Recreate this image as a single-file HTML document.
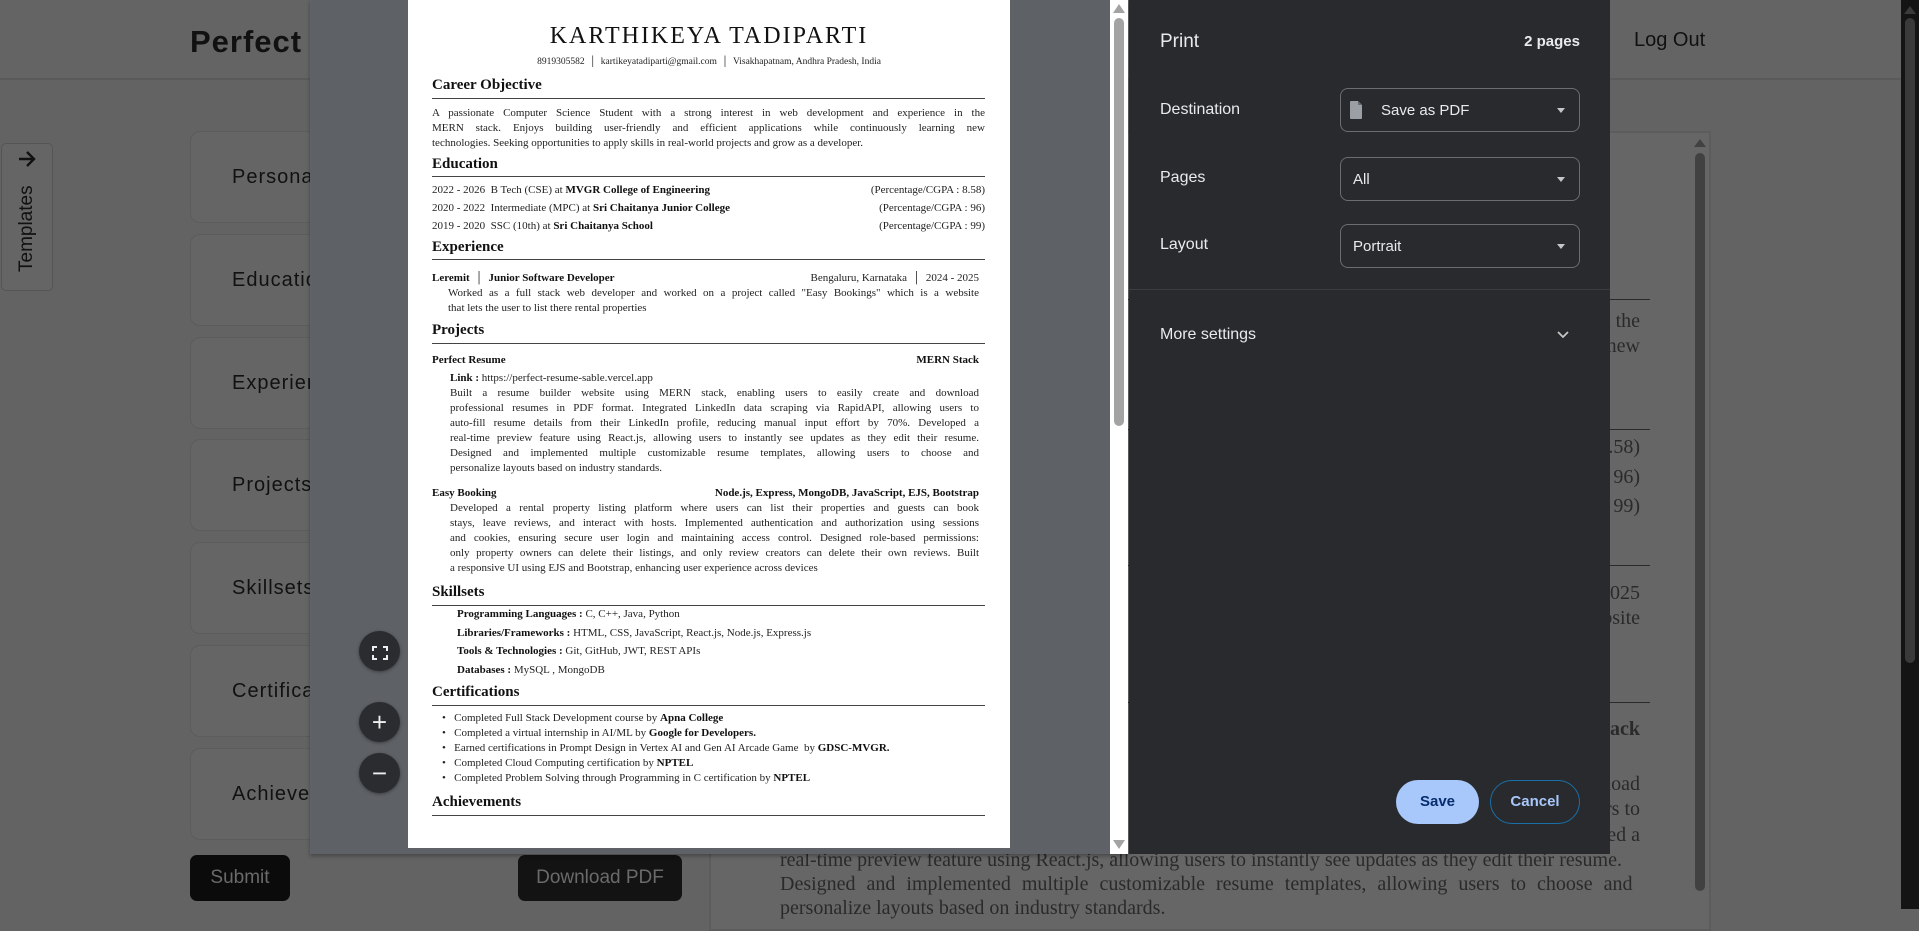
<!DOCTYPE html>
<html><head><meta charset="utf-8"><style>
*{margin:0;padding:0;box-sizing:border-box}
body{width:1919px;height:909px;overflow:hidden;background:#636363;font-family:"Liberation Sans",sans-serif;position:relative}
.a{position:absolute}
.hdr{left:0;top:0;width:1901px;height:80px;border-bottom:2px solid #5a5a5a;background:#646464}
.card{left:190px;width:520px;height:92px;border:1px solid #5c5c5c;border-radius:10px;background:#656565}
.card span{position:absolute;left:41px;top:34px;font-size:20px;letter-spacing:1px;color:#111}
.btn{background:#0b0b0b;color:#6a6a6a;border-radius:7px;font-size:19px;text-align:center;line-height:45px}
.rp{left:709px;top:131px;width:1002px;height:800px;border:2px solid #5c5c5c;background:#666}
.rt{font-family:"Liberation Serif",serif;font-size:20px;color:#2a2a2a;left:780px;width:860px;line-height:24px;white-space:nowrap}
.rule{height:1px;background:#2a2a2a}
.pv{left:310px;top:0;width:818px;height:854px;background:#5e6166;box-shadow:0 2px 4px rgba(0,0,0,.3)}
.page{left:408px;top:0;width:602px;height:848px;background:#fff}
.page div{position:absolute;font-family:"Liberation Serif",serif;font-size:11px;color:#222;line-height:14px;white-space:nowrap}
.page .h{font-size:15px;font-weight:bold;color:#111}
.page .r{height:1px;background:#444;left:24px;width:553px}
.page .j{text-align:justify;text-align-last:justify;white-space:normal;height:14px;overflow:hidden}
.page b{color:#111}
.dlg{left:1129px;top:0;width:481px;height:854px;background:#292a2d;color:#e8eaed;font-family:"Liberation Sans",sans-serif}
.dlg .lb{position:absolute;left:31px;font-size:16px}
.sel{position:absolute;left:211px;width:240px;height:44px;border:1px solid #6b6d71;border-radius:8px;font-size:15px}
.sel span{position:absolute;left:12px;top:13px}
.sel i{position:absolute;right:14px;top:19px;border-left:4px solid transparent;border-right:4px solid transparent;border-top:5px solid #c4c7c5}
.zb{left:359px;width:41px;height:40px;border-radius:50%;background:#2b2c2f;color:#eee;text-align:center;font-size:26px;line-height:40px;box-shadow:0 1px 3px rgba(0,0,0,.4)}
</style></head><body>
<div class="a hdr"></div>
<div class="a" style="left:190px;top:24px;font-size:31px;font-weight:bold;letter-spacing:1px;color:#111">Perfect Resume</div>
<div class="a" style="left:1634px;top:29px;font-size:20px;color:#111">Log Out</div>
<div class="a" style="left:1px;top:143px;width:52px;height:148px;border:1px solid #555;border-radius:5px;background:#656565"></div>
<svg class="a" style="left:17px;top:150px" width="20" height="18" viewBox="0 0 20 18"><path d="M2 9h15M10 2l7 7-7 7" stroke="#111" stroke-width="2.4" fill="none"/></svg>
<div class="a" style="left:-13px;top:221px;transform:rotate(-90deg);font-size:19px;color:#111;width:80px;text-align:center;line-height:22px">Templates</div>
<div class="a card" style="top:131px"><span>Personal Details</span></div>
<div class="a card" style="top:234px"><span>Education</span></div>
<div class="a card" style="top:337px"><span>Experience</span></div>
<div class="a card" style="top:439px"><span>Projects</span></div>
<div class="a card" style="top:542px"><span>Skillsets</span></div>
<div class="a card" style="top:645px"><span>Certifications</span></div>
<div class="a card" style="top:748px"><span>Achievements</span></div>
<div class="a btn" style="left:190px;top:855px;width:100px;height:46px">Submit</div>
<div class="a btn" style="left:518px;top:855px;width:164px;height:46px;background:#131313">Download PDF</div>

<div class="a rp"></div>
<div class="a" style="left:1695px;top:153px;width:10px;height:738px;border-radius:5px;background:#414141"></div>
<div class="a" style="left:1694px;top:139px;border-left:6px solid transparent;border-right:6px solid transparent;border-bottom:8px solid #414141"></div>
<div class="a rule" style="left:780px;top:299px;width:870px"></div>
<div class="a rt" style="top:309px;text-align:right;width:860px">experience in the</div>
<div class="a rt" style="top:334px;text-align:right;width:860px">learning new</div>
<div class="a rule" style="left:780px;top:429px;width:870px"></div>
<div class="a rt" style="top:435px;text-align:right;width:860px">(Percentage/CGPA : 8.58)</div>
<div class="a rt" style="top:465px;text-align:right;width:860px">(Percentage/CGPA : 96)</div>
<div class="a rt" style="top:494px;text-align:right;width:860px">(Percentage/CGPA : 99)</div>
<div class="a rule" style="left:780px;top:565px;width:870px"></div>
<div class="a rt" style="top:581px;text-align:right;width:860px">2024 - 2025</div>
<div class="a rt" style="top:606px;text-align:right;width:860px">which is a website</div>
<div class="a rule" style="left:780px;top:702px;width:870px"></div>
<div class="a rt" style="top:717px;text-align:right;width:860px;font-weight:bold">MERN Stack</div>
<div class="a rt" style="top:772px;text-align:right;width:860px">create and download</div>
<div class="a rt" style="top:797px;text-align:right;width:860px">allowing users to</div>
<div class="a rt" style="top:823px;text-align:right;width:860px">Developed a</div>
<div class="a rt" style="top:848px">real-time preview feature using React.js, allowing users to instantly see updates as they edit their resume.</div>
<div class="a rt" style="top:872px;word-spacing:6px">Designed and implemented multiple customizable resume templates, allowing users to choose and</div>
<div class="a rt" style="top:896px">personalize layouts based on industry standards.</div>

<div class="a" style="left:1901px;top:0;width:18px;height:909px;background:#141414"></div>
<div class="a" style="left:1905px;top:18px;width:10px;height:645px;border-radius:5px;background:#3a3a3a"></div>
<div class="a" style="left:1904px;top:6px;border-left:6px solid transparent;border-right:6px solid transparent;border-bottom:8px solid #3a3a3a"></div>

<div class="a pv"></div>
<div class="a" style="left:1110px;top:0;width:18px;height:854px;background:#fff"></div>
<div class="a" style="left:1114px;top:18px;width:10px;height:408px;border-radius:5px;background:#a3a3a3"></div>
<div class="a" style="left:1113px;top:4px;border-left:6px solid transparent;border-right:6px solid transparent;border-bottom:9px solid #a3a3a3"></div>
<div class="a" style="left:1113px;top:840px;border-left:6px solid transparent;border-right:6px solid transparent;border-top:9px solid #a3a3a3"></div>
<div class="a zb" style="top:631px"><svg width="16" height="14" viewBox="0 0 16 14" style="margin-top:13px"><path d="M1 5V1h4M11 1h4v4M15 9v4h-4M5 13H1V9" stroke="#eee" stroke-width="2" fill="none"/></svg></div>
<div class="a zb" style="top:702px">+</div>
<div class="a zb" style="top:753px">−</div>

<div class="a page">
<div style="left:0;width:602px;text-align:center;top:22px;font-size:24px;line-height:28px;letter-spacing:2px;color:#111">KARTHIKEYA TADIPARTI</div>
<div style="left:0;width:602px;text-align:center;top:55px;font-size:9.5px">8919305582 &nbsp;│&nbsp; kartikeyatadiparti@gmail.com &nbsp;│&nbsp; Visakhapatnam, Andhra Pradesh, India</div>
<div class="h" style="left:24px;top:78px">Career Objective</div><div class="r" style="top:98px"></div>
<div class="j" style="left:24px;top:106px;width:553px">A passionate Computer Science Student with a strong interest in web development and experience in the</div>
<div class="j" style="left:24px;top:121px;width:553px">MERN stack. Enjoys building user-friendly and efficient applications while continuously learning new</div>
<div style="left:24px;top:136px">technologies. Seeking opportunities to apply skills in real-world projects and grow as a developer.</div>
<div class="h" style="left:24px;top:157px">Education</div><div class="r" style="top:176px"></div>
<div style="left:24px;top:183px">2022 - 2026&nbsp; B Tech (CSE) at <b>MVGR College of Engineering</b></div><div style="right:25px;top:183px">(Percentage/CGPA : 8.58)</div>
<div style="left:24px;top:201px">2020 - 2022&nbsp; Intermediate (MPC) at <b>Sri Chaitanya Junior College</b></div><div style="right:25px;top:201px">(Percentage/CGPA : 96)</div>
<div style="left:24px;top:219px">2019 - 2020&nbsp; SSC (10th) at <b>Sri Chaitanya School</b></div><div style="right:25px;top:219px">(Percentage/CGPA : 99)</div>
<div class="h" style="left:24px;top:240px">Experience</div><div class="r" style="top:259px"></div>
<div style="left:24px;top:271px"><b>Leremit</b> &nbsp;│&nbsp; <b>Junior Software Developer</b></div><div style="right:31px;top:271px">Bengaluru, Karnataka &nbsp;│&nbsp; 2024 - 2025</div>
<div class="j" style="left:40px;top:286px;width:531px">Worked as a full stack web developer and worked on a project called "Easy Bookings" which is a website</div>
<div style="left:40px;top:301px">that lets the user to list there rental properties</div>
<div class="h" style="left:24px;top:323px">Projects</div><div class="r" style="top:343px"></div>
<div style="left:24px;top:353px"><b>Perfect Resume</b></div><div style="right:31px;top:353px"><b>MERN Stack</b></div>
<div style="left:42px;top:371px"><b>Link :</b> https://perfect-resume-sable.vercel.app</div>
<div class="j" style="left:42px;top:386px;width:529px">Built a resume builder website using MERN stack, enabling users to easily create and download</div>
<div class="j" style="left:42px;top:401px;width:529px">professional resumes in PDF format. Integrated LinkedIn data scraping via RapidAPI, allowing users to</div>
<div class="j" style="left:42px;top:416px;width:529px">auto-fill resume details from their LinkedIn profile, reducing manual input effort by 70%. Developed a</div>
<div class="j" style="left:42px;top:431px;width:529px">real-time preview feature using React.js, allowing users to instantly see updates as they edit their resume.</div>
<div class="j" style="left:42px;top:446px;width:529px">Designed and implemented multiple customizable resume templates, allowing users to choose and</div>
<div style="left:42px;top:461px">personalize layouts based on industry standards.</div>
<div style="left:24px;top:486px"><b>Easy Booking</b></div><div style="right:31px;top:486px"><b>Node.js, Express, MongoDB, JavaScript, EJS, Bootstrap</b></div>
<div class="j" style="left:42px;top:501px;width:529px">Developed a rental property listing platform where users can list their properties and guests can book</div>
<div class="j" style="left:42px;top:516px;width:529px">stays, leave reviews, and interact with hosts. Implemented authentication and authorization using sessions</div>
<div class="j" style="left:42px;top:531px;width:529px">and cookies, ensuring secure user login and maintaining access control. Designed role-based permissions:</div>
<div class="j" style="left:42px;top:546px;width:529px">only property owners can delete their listings, and only review creators can delete their own reviews. Built</div>
<div style="left:42px;top:561px">a responsive UI using EJS and Bootstrap, enhancing user experience across devices</div>
<div class="h" style="left:24px;top:585px">Skillsets</div><div class="r" style="top:605px"></div>
<div style="left:49px;top:607px"><b>Programming Languages :</b> C, C++, Java, Python</div>
<div style="left:49px;top:626px"><b>Libraries/Frameworks :</b> HTML, CSS, JavaScript, React.js, Node.js, Express.js</div>
<div style="left:49px;top:644px"><b>Tools &amp; Technologies :</b> Git, GitHub, JWT, REST APIs</div>
<div style="left:49px;top:663px"><b>Databases :</b> MySQL , MongoDB</div>
<div class="h" style="left:24px;top:685px">Certifications</div><div class="r" style="top:705px"></div>
<div style="left:34px;top:711px">•&nbsp;&nbsp; Completed Full Stack Development course by <b>Apna College</b></div>
<div style="left:34px;top:726px">•&nbsp;&nbsp; Completed a virtual internship in AI/ML by <b>Google for Developers.</b></div>
<div style="left:34px;top:741px">•&nbsp;&nbsp; Earned certifications in Prompt Design in Vertex AI and Gen AI Arcade Game&nbsp; by <b>GDSC-MVGR.</b></div>
<div style="left:34px;top:756px">•&nbsp;&nbsp; Completed Cloud Computing certification by <b>NPTEL</b></div>
<div style="left:34px;top:771px">•&nbsp;&nbsp; Completed Problem Solving through Programming in C certification by <b>NPTEL</b></div>
<div class="h" style="left:24px;top:795px">Achievements</div><div class="r" style="top:815px"></div>
</div>

<div class="a dlg">
<div class="a" style="left:31px;top:31px;font-size:19px">Print</div>
<div class="a" style="right:30px;top:33px;font-size:15px;font-weight:bold">2 pages</div>
<div class="lb" style="top:101px">Destination</div>
<div class="sel" style="top:88px"><svg style="position:absolute;left:9px;top:12px" width="12" height="18" viewBox="0 0 12 18"><path d="M1 0h7l4 4v13a1 1 0 0 1-1 1H1a1 1 0 0 1-1-1V1a1 1 0 0 1 1-1z" fill="#9aa0a6"/><path d="M8 0v4h4" fill="#6b6f74"/></svg><span style="left:40px">Save as PDF</span><i></i></div>
<div class="lb" style="top:169px">Pages</div>
<div class="sel" style="top:157px"><span>All</span><i></i></div>
<div class="lb" style="top:236px">Layout</div>
<div class="sel" style="top:224px"><span>Portrait</span><i></i></div>
<div class="a" style="left:0;top:289px;width:481px;height:1px;background:#3c3d40"></div>
<div class="lb" style="top:326px">More settings</div>
<svg class="a" style="left:427px;top:330px" width="14" height="10" viewBox="0 0 14 10"><path d="M2 2l5 5 5-5" stroke="#c4c7c5" stroke-width="1.8" fill="none"/></svg>
<div class="a" style="left:267px;top:780px;width:83px;height:44px;border-radius:22px;background:#a8c7fa;color:#062e6f;font-size:15px;font-weight:bold;text-align:center;line-height:44px">Save</div>
<div class="a" style="left:361px;top:780px;width:90px;height:44px;border-radius:22px;border:1px solid #1a6fa8;color:#a8c7fa;font-size:15px;font-weight:bold;text-align:center;line-height:42px">Cancel</div>
</div>
</body></html>
